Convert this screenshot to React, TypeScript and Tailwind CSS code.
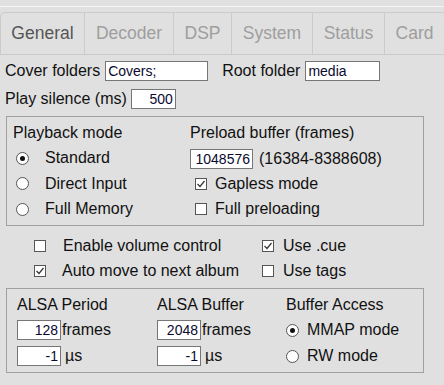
import React from "react";

const font = { fontFamily: '"Liberation Sans", Arial, sans-serif' };

function Box({ w, value, right }: { w: string; value: string; right?: boolean }) {
  return (
    <div
      className={`${w} h-[20px] bg-white border border-[#767676] flex items-center text-[14px] leading-none text-[#0a0a30] ${right ? "justify-end pr-[2px]" : "pl-[2px]"}`}
    >
      {value}
    </div>
  );
}

function Check({ on }: { on?: boolean }) {
  return (
    <span className="w-[12px] h-[12px] bg-white border border-[#555] flex items-center justify-center shrink-0">
      {on && (
        <svg width="10" height="10" viewBox="0 0 10 10">
          <path d="M1.5 5 L4 7.5 L8.5 2" fill="none" stroke="#333" strokeWidth="1.2" />
        </svg>
      )}
    </span>
  );
}

function Radio({ on }: { on?: boolean }) {
  return (
    <span className="w-[13px] h-[13px] rounded-full bg-white border border-[#555] flex items-center justify-center shrink-0">
      {on && <span className="w-[5px] h-[5px] rounded-full bg-[#111]" />}
    </span>
  );
}

const tabs: [string, string][] = [
  ["General", "w-[84px]"],
  ["Decoder", "w-[89px]"],
  ["DSP", "w-[58px]"],
  ["System", "w-[81px]"],
  ["Status", "w-[72px]"],
  ["Card", "w-[60px]"],
];

export default function App() {
  return (
    <div className="w-[444px] h-[385px] bg-[#e0e0e0] overflow-hidden text-[16px] text-[#111]" style={font}>
      <div className="h-[6px]" />
      <div className="h-px bg-[#f4f4f4]" />
      <div className="h-[5px]" />
      <div className="flex h-[43px] border-t border-b border-l border-[#cbcbcb] rounded-tl-[5px] w-[460px]">
        {tabs.map(([t, w], i) => (
          <div
            key={t}
            className={`${w} shrink-0 h-full flex items-center justify-center border-r border-[#cbcbcb] text-[17.5px] ${i === 0 ? "text-[#555]" : "text-[#9e9e9e]"}`}
          >
            {t}
          </div>
        ))}
      </div>

      <div className="mt-[6px] flex items-center h-[20px] pl-[5px]">
        <span className="mr-[5px]">Cover folders</span>
        <Box w="w-[103px]" value="Covers;" />
        <span className="ml-[14px] mr-[5px]">Root folder</span>
        <Box w="w-[75px]" value="media" />
      </div>
      <div className="mt-[8px] flex items-center h-[20px] pl-[5px]">
        <span className="mr-[4px]">Play silence (ms)</span>
        <Box w="w-[45px]" value="500" right />
      </div>

      <div className="mt-[7px] ml-[6px] w-[418px] border border-[#a0a0a0] pt-[4px] pb-[3px] flex">
        <div className="w-[183px] pl-[6px] flex flex-col">
          <div className="h-[24px] flex items-center">Playback mode</div>
          <div className="h-[26px] flex items-center pl-[3px]">
            <Radio on />
            <span className="ml-[16px]">Standard</span>
          </div>
          <div className="h-[25px] flex items-center pl-[3px]">
            <Radio />
            <span className="ml-[16px]">Direct Input</span>
          </div>
          <div className="h-[26px] flex items-center pl-[3px]">
            <Radio />
            <span className="ml-[16px]">Full Memory</span>
          </div>
        </div>
        <div className="flex flex-col">
          <div className="h-[24px] flex items-center">Preload buffer (frames)</div>
          <div className="h-[26px] flex items-center pt-[2px]">
            <Box w="w-[63px]" value="1048576" right />
            <span className="ml-[6px]">(16384-8388608)</span>
          </div>
          <div className="h-[25px] flex items-center pl-[5px]">
            <Check on />
            <span className="ml-[8px]">Gapless mode</span>
          </div>
          <div className="h-[26px] flex items-center pl-[5px]">
            <Check />
            <span className="ml-[8px]">Full preloading</span>
          </div>
        </div>
      </div>

      <div className="mt-[8px] flex">
        <div className="w-[262px] pl-[34px] flex flex-col">
          <div className="h-[24px] flex items-center">
            <Check />
            <span className="ml-[17px]">Enable volume control</span>
          </div>
          <div className="h-[25px] flex items-center">
            <Check on />
            <span className="ml-[16px]">Auto move to next album</span>
          </div>
        </div>
        <div className="flex flex-col">
          <div className="h-[24px] flex items-center">
            <Check on />
            <span className="ml-[9px]">Use .cue</span>
          </div>
          <div className="h-[25px] flex items-center">
            <Check />
            <span className="ml-[9px]">Use tags</span>
          </div>
        </div>
      </div>

      <div className="mt-[5px] ml-[6px] w-[418px] border border-[#a0a0a0] pt-[4px] pb-[3px] flex">
        <div className="w-[150px] pl-[10px] flex flex-col">
          <div className="h-[24px] flex items-center">ALSA Period</div>
          <div className="h-[26px] flex items-center">
            <Box w="w-[44px]" value="128" right />
            <span className="ml-[1px]">frames</span>
          </div>
          <div className="h-[26px] flex items-center">
            <Box w="w-[44px]" value="-1" right />
            <span className="ml-[4px]">µs</span>
          </div>
        </div>
        <div className="w-[129px] flex flex-col">
          <div className="h-[24px] flex items-center">ALSA Buffer</div>
          <div className="h-[26px] flex items-center">
            <Box w="w-[44px]" value="2048" right />
            <span className="ml-[1px]">frames</span>
          </div>
          <div className="h-[26px] flex items-center">
            <Box w="w-[44px]" value="-1" right />
            <span className="ml-[4px]">µs</span>
          </div>
        </div>
        <div className="flex flex-col">
          <div className="h-[24px] flex items-center">Buffer Access</div>
          <div className="h-[26px] flex items-center">
            <Radio on />
            <span className="ml-[8px]">MMAP mode</span>
          </div>
          <div className="h-[26px] flex items-center">
            <Radio />
            <span className="ml-[8px]">RW mode</span>
          </div>
        </div>
      </div>
    </div>
  );
}
